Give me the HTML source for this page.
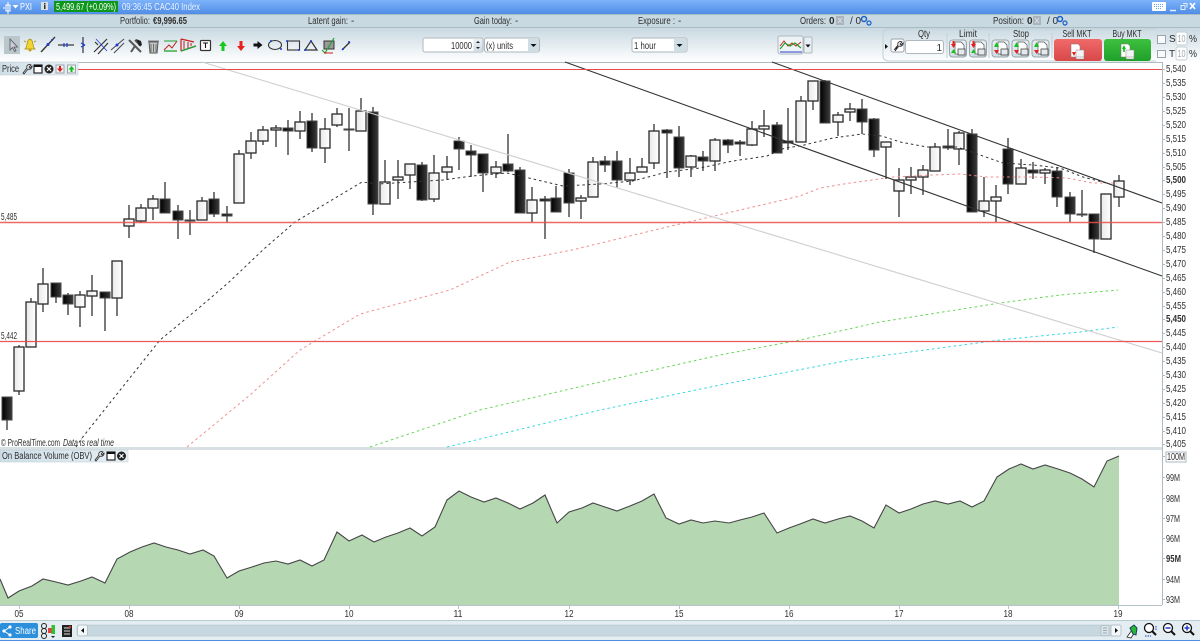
<!DOCTYPE html>
<html><head><meta charset="utf-8"><title>PXI</title>
<style>
html,body{margin:0;padding:0;background:#fff;width:1200px;height:641px;overflow:hidden}
svg{display:block}
text{font-family:"Liberation Sans",Arial,sans-serif;font-size:10px;fill:#2e2e2e}
.w rect{fill:url(#gw);stroke:#2a2a2a;stroke-width:1.300}
.k rect{fill:url(#gk);stroke:#444;stroke-width:1}
</style></head><body>
<svg width="1200" height="641" viewBox="0 0 1200 641" xmlns="http://www.w3.org/2000/svg">
<defs>
<linearGradient id="gt" x1="0" y1="0" x2="0" y2="1"><stop offset="0" stop-color="#7eb3fb"/><stop offset="1" stop-color="#4f8de6"/></linearGradient>
<linearGradient id="gb" x1="0" y1="0" x2="0" y2="1"><stop offset="0" stop-color="#c9d9e2"/><stop offset="1" stop-color="#fff"/></linearGradient>
<linearGradient id="gl" x1="0" y1="0" x2="1" y2="0"><stop offset="0" stop-color="#cfdfe8"/><stop offset="1" stop-color="#e6eff4"/></linearGradient>
<linearGradient id="gw" x1="0" y1="0" x2="1" y2="0"><stop offset="0" stop-color="#e9e9e9"/><stop offset="1" stop-color="#fff"/></linearGradient>
<linearGradient id="gk" x1="0" y1="0" x2="1" y2="0"><stop offset="0" stop-color="#000"/><stop offset="1" stop-color="#3a3a3a"/></linearGradient>
<linearGradient id="gr" x1="0" y1="0" x2="0" y2="1"><stop offset="0" stop-color="#f06a6a"/><stop offset="1" stop-color="#d84848"/></linearGradient>
<linearGradient id="gg" x1="0" y1="0" x2="0" y2="1"><stop offset="0" stop-color="#3ec03e"/><stop offset="1" stop-color="#1fa02a"/></linearGradient>
<linearGradient id="gq" x1="0" y1="0" x2="0" y2="1"><stop offset="0" stop-color="#e8f0f4"/><stop offset="1" stop-color="#cfdde5"/></linearGradient>
</defs>

<!-- title bar -->
<rect width="1200" height="14" fill="url(#gt)"/>
<path d="M3 8h2M6 5h4v6H6zM8 2v12" stroke="#fff" stroke-width="1" fill="none"/>
<path d="M12.500 5h6l-3 3.500z" fill="#fff"/>
<text x="20" y="10" style="fill:#fff" textLength="12" lengthAdjust="spacingAndGlyphs">PXI</text>
<rect x="41" y="2" width="7" height="8" fill="#d8e0e4"/><rect x="44" y="3" width="1.500" height="1.500" fill="#333"/><rect x="44" y="5" width="1.500" height="4" fill="#333"/>
<rect x="54" y="1" width="64" height="11" fill="#0c961a"/>
<text x="56" y="10" style="fill:#fff" textLength="60" lengthAdjust="spacingAndGlyphs">5,499.67 (+0.09%)</text>
<text x="122" y="10" style="fill:#eaf2ff" textLength="78" lengthAdjust="spacingAndGlyphs">09:36:45 CAC40 Index</text>
<rect x="1152" y="2" width="14" height="9" rx="1" fill="#fff"/><path d="M1154 4.500h10M1154 6.500h10M1156 8.500h6" stroke="#6aa3ee" stroke-width="1" stroke-dasharray="1 1"/>
<path d="M1170 10.500h6" stroke="#e6effb" stroke-width="1.500"/>
<path d="M1181 5.500h4v4h-4zM1183 3.500h4v4" stroke="#e6effb" fill="none"/>
<path d="M1190 3l5 6M1195 3l-5 6" stroke="#fff" stroke-width="1.600"/>

<!-- info row -->
<rect y="14" width="1200" height="14" fill="#c9d9e2"/>
<path d="M0 14.500H1200M0 27.500H1200" stroke="#a8bcc6"/>
<g>
<text x="120" y="24" textLength="30" lengthAdjust="spacingAndGlyphs">Portfolio:</text>
<text x="153" y="24" font-weight="700" textLength="34" lengthAdjust="spacingAndGlyphs">€9,996.65</text>
<text x="308" y="24" textLength="40" lengthAdjust="spacingAndGlyphs">Latent gain:</text><text x="351" y="24">-</text>
<text x="474" y="24" textLength="38" lengthAdjust="spacingAndGlyphs">Gain today:</text><text x="515" y="24">-</text>
<text x="638" y="24" textLength="37" lengthAdjust="spacingAndGlyphs">Exposure :</text><text x="678" y="24">-</text>
<text x="800" y="24" textLength="26" lengthAdjust="spacingAndGlyphs">Orders:</text><text x="829" y="24" font-weight="700">0</text>
<rect x="836" y="16" width="8" height="9" fill="#a9b5ba"/><path d="M838 18l4 5M842 18l-4 5" stroke="#dde"/>
<text x="850" y="24">/ 0</text>
<circle cx="864" cy="19" r="2.500" fill="none" stroke="#1860c8" stroke-width="1.500"/><circle cx="869" cy="23" r="2" fill="none" stroke="#1860c8" stroke-width="1.200"/>
<text x="993" y="24" textLength="31" lengthAdjust="spacingAndGlyphs">Position:</text><text x="1027" y="24" font-weight="700">0</text>
<rect x="1033" y="16" width="8" height="9" fill="#a9b5ba"/><path d="M1035 18l4 5M1039 18l-4 5" stroke="#dde"/>
<text x="1047" y="24">/ 0</text>
<circle cx="1060" cy="19" r="2.500" fill="none" stroke="#1860c8" stroke-width="1.500"/><circle cx="1065" cy="23" r="2" fill="none" stroke="#1860c8" stroke-width="1.200"/>
</g>

<!-- toolbar -->
<rect y="28" width="1200" height="34" fill="url(#gb)"/>
<rect x="4" y="36" width="16" height="18" fill="#b9c6cc"/>
<path d="M10 39v11l2.500-2.500 2 4 1.500-.8-2-3.700h3.500z" fill="#ccd" stroke="#555" stroke-width=".8"/>
<path d="M25 49c3-2 1-9 5-10 4 1 2 8 5 10z" fill="#f3d431" stroke="#a08a10" stroke-width=".7"/><circle cx="30" cy="50" r="1.500" fill="#c8a010"/><path d="M24 41l2 1M36 41l-2 1" stroke="#b8a020"/>
<path d="M41 52l14-15" stroke="#333" stroke-width="1.300"/><circle cx="48" cy="44.500" r="1.500" fill="#1c3cd0"/><circle cx="52" cy="40" r="1" fill="#1c3cd0"/>
<path d="M58 45h16" stroke="#333" stroke-width="1.200"/><path d="M64 43v4M67 43v4" stroke="#1c3cd0" stroke-width="1.200"/>
<path d="M83 37v16" stroke="#556" stroke-width="1.500"/><path d="M81 43l4 2M81 47l4-2" stroke="#1c3cd0" stroke-width="1.200"/>
<path d="M94 52l13-13M98 54l10-11M95 42l3 3" stroke="#333" stroke-width="1.200"/><path d="M96 39l11 12" stroke="#1c3cd0" stroke-width=".8"/>
<path d="M111 50l13-11M114 53l10-10" stroke="#445" stroke-width="1"/><circle cx="117" cy="45" r="1.500" fill="#1c3cd0"/>
<path d="M129 40l12 12M131 52l4-6M135 40l6 6" stroke="#555" stroke-width="2" fill="none"/><path d="M136 39l5 2 1 4-3 1z" fill="#222"/>
<path d="M149 42h9l-1 11h-7z" fill="#c6c8c8" stroke="#555"/><path d="M148 41h11M151 44v8M153.500 44v8M156 44v8" stroke="#555" stroke-width=".8"/>
<path d="M164 50l5-5 3 3 5-7" stroke="#c02020" fill="none" stroke-width="1"/><path d="M164 41h13" stroke="#22a030"/><path d="M164 51h13" stroke="#22a030" stroke-width="1.300"/>
<path d="M181 39l13 3M181 39v12M181 51l15-5" stroke="#c82020" stroke-width="1.200" fill="none"/><path d="M184 41v8M188 42v6M191 43v3" stroke="#b02020"/><path d="M181 51l15-5" stroke="#20a030" stroke-width="1.200"/>
<rect x="200.500" y="40.500" width="10" height="10" rx="1" fill="#fff" stroke="#333" stroke-width="1.200"/><path d="M203 43h5M205.500 43v5" stroke="#111" stroke-width="1.100"/>
<path d="M223 41l-4 5h2.500v5h3v-5h2.500z" fill="#17c81f"/>
<path d="M241 51l-4-5h2.500v-5h3v5h2.500z" fill="#e81f1f"/>
<path d="M262.500 45l-5-4v2.500h-4v3h4v2.500z" fill="#111"/>
<ellipse cx="275" cy="45" rx="6.500" ry="4.500" fill="none" stroke="#333" stroke-width="1.100"/><circle cx="271" cy="41" r="1" fill="#1c3cd0"/><circle cx="281" cy="49" r="1" fill="#1c3cd0"/>
<rect x="287.500" y="41" width="12" height="9" fill="none" stroke="#333" stroke-width="1.100"/><circle cx="287" cy="41" r="1" fill="#1c3cd0"/><circle cx="299" cy="50" r="1" fill="#1c3cd0"/>
<path d="M311 41l-6 9h12z" fill="none" stroke="#333" stroke-width="1.200"/><circle cx="311" cy="41" r="1" fill="#1c3cd0"/><circle cx="305" cy="50" r="1" fill="#1c3cd0"/>
<rect x="324" y="41" width="10" height="8" fill="#999" stroke="#333"/><path d="M322 50l3 3 9-15" stroke="#20a030" stroke-width="1.200" fill="none"/><path d="M324 53h9" stroke="#d02020"/>
<path d="M342 50l8-8" stroke="#333" stroke-width="1.300"/><circle cx="343" cy="49" r="1" fill="#1c3cd0"/><circle cx="349" cy="42" r="1" fill="#1c3cd0"/>

<!-- quantity -->
<rect x="423" y="38" width="60" height="14" rx="2" fill="#fff" stroke="#aeb9be"/>
<text x="472" y="49" text-anchor="end" textLength="21" lengthAdjust="spacingAndGlyphs">10000</text>
<rect x="473.500" y="39" width="9" height="12" fill="url(#gq)"/><path d="M476 43h4l-2-2zM476 47h4l-2 2z" fill="#222"/>
<rect x="484.500" y="38" width="55" height="14" rx="2" fill="#fff" stroke="#aeb9be"/>
<text x="486" y="49" textLength="27" lengthAdjust="spacingAndGlyphs">(x) units</text>
<rect x="528" y="39" width="11" height="12" fill="#cfdde5"/><path d="M530.500 44h6l-3 3z" fill="#111"/>
<rect x="632" y="38" width="55" height="14" rx="2" fill="#fff" stroke="#aeb9be"/>
<text x="634" y="49" textLength="22" lengthAdjust="spacingAndGlyphs">1 hour</text>
<rect x="674" y="39" width="12" height="12" fill="#cfdde5"/><path d="M676.500 44h6l-3 3z" fill="#111"/>

<!-- chart type -->
<rect x="778" y="36" width="25" height="18" rx="2" fill="#eef3f5" stroke="#aeb9be"/>
<path d="M780 46l4-5 4 5 4-3 4 3 5-4" stroke="#d02020" fill="none"/><path d="M780 49l5-6 5 3 5-3 6 5" stroke="#20a030" fill="none" stroke-width="1.200"/><path d="M780 52h22" stroke="#2a3ccc"/>
<rect x="804" y="37" width="8" height="16" rx="1" fill="#e8eff3" stroke="#aeb9be"/><path d="M805.500 44.500h5l-2.500 3z" fill="#111"/>

<!-- order panel -->
<path d="M1156 29H889q-6 0-6 6v20q0 6 6 6h267" fill="none" stroke="#c4d0d6"/>
<path d="M885 44l3 2.500-3 2.500z" fill="#111"/>
<rect x="891" y="39" width="13" height="13" rx="2" fill="#fff" stroke="#9aa5aa"/>
<path d="M894 50l4-5m0 0c-1-3 2-4 4-3l-2 2 1 1 2-2c.5 2-2 4-4 3l-4 5z" fill="#fff" stroke="#222" stroke-width=".8"/>
<rect x="905.500" y="40.500" width="38" height="13" rx="2" fill="#fff" stroke="#aeb9be"/>
<text x="942" y="51" text-anchor="end">1</text>
<text x="924" y="37" text-anchor="middle" textLength="12" lengthAdjust="spacingAndGlyphs">Qty</text>
<text x="968" y="37" text-anchor="middle" textLength="18" lengthAdjust="spacingAndGlyphs">Limit</text>
<text x="1021" y="37" text-anchor="middle" textLength="16" lengthAdjust="spacingAndGlyphs">Stop</text>
<text x="1077" y="37" text-anchor="middle" textLength="29" lengthAdjust="spacingAndGlyphs">Sell MKT</text>
<text x="1127" y="37" text-anchor="middle" textLength="29" lengthAdjust="spacingAndGlyphs">Buy MKT</text>
<path d="M947 33v25M989 33v25M1052 33v25" stroke="#c4d0d6"/>
<g fill="url(#gq)" stroke="#9aa5aa"><rect x="949.500" y="40" width="17" height="17" rx="3"/><rect x="969.500" y="40" width="17" height="17" rx="3"/><rect x="992" y="40" width="17" height="17" rx="3"/><rect x="1012" y="40" width="17" height="17" rx="3"/><rect x="1032" y="40" width="17" height="17" rx="3"/></g>
<g fill="#fff" stroke="#555" stroke-width=".7"><path d="M955 42h6l3 3v9h-9z"/><path d="M975 42h6l3 3v9h-9z"/><path d="M998 42h6l3 3v9h-9z"/><path d="M1018 42h6l3 3v9h-9z"/><path d="M1038 42h6l3 3v9h-9z"/></g>
<g stroke="#444" stroke-width=".8" fill="#e3e9ec"><rect x="958" y="49" width="7" height="6"/><rect x="978" y="49" width="7" height="6"/><rect x="1001" y="49" width="7" height="6"/><rect x="1021" y="49" width="7" height="6"/><rect x="1041" y="49" width="7" height="6"/></g>
<g fill="#e81f1f"><path d="M951 44h5l-2.500 4zM971 44h5l-2.500 4zM994 50h5l-2.500 4zM1014 50h5l-2.500 4zM1034 50h5l-2.500 4z"/><rect x="952.500" y="41" width="2" height="3"/><rect x="972.500" y="41" width="2" height="3"/></g>
<g fill="#14c41c"><path d="M951 53h5l-2.500-4zM971 53h5l-2.500-4zM994 47h5l-2.500-5zM1014 47h5l-2.500-5zM1034 47h5l-2.500-5z"/></g>
<rect x="1054" y="39" width="48" height="22" rx="3" fill="url(#gr)"/>
<rect x="1104" y="39" width="47" height="22" rx="3" fill="url(#gg)"/>
<path d="M1071 44h7l2 2v6h4v7h-8v-2h-5z" fill="#fff" stroke="#777" stroke-width=".5"/><rect x="1076" y="50" width="8" height="7" fill="#f4f4f4" stroke="#888" stroke-width=".5"/><path d="M1072 52l4 .1-2 3.900z" fill="#e01818"/>
<path d="M1121 44h7l2 2v6h4v7h-8v-2h-5z" fill="#fff" stroke="#777" stroke-width=".5"/><rect x="1126" y="50" width="8" height="7" fill="#f4f4f4" stroke="#888" stroke-width=".5"/><path d="M1122 49l4 .1-2-4z" fill="#10c018"/><rect x="1123.200" y="49" width="1.600" height="3" fill="#10c018"/>
<g fill="#f8fafb" stroke="#9aa5aa"><rect x="1157.500" y="35.500" width="8" height="8"/><rect x="1157.500" y="50.500" width="8" height="7"/></g>
<text x="1169" y="42">S</text><text x="1169" y="57">T</text>
<g fill="#fff" stroke="#c4ced3"><rect x="1176" y="32" width="11" height="13" rx="2"/><rect x="1176" y="47" width="11" height="13" rx="2"/></g>
<text x="1181.500" y="42" text-anchor="middle" style="fill:#a0a8ad" textLength="8" lengthAdjust="spacingAndGlyphs">10</text>
<text x="1181.500" y="57" text-anchor="middle" style="fill:#a0a8ad" textLength="8" lengthAdjust="spacingAndGlyphs">10</text>
<text x="1189" y="42" textLength="8" lengthAdjust="spacingAndGlyphs">%</text><text x="1189" y="57" textLength="8" lengthAdjust="spacingAndGlyphs">%</text>

<!-- chart frame -->
<path d="M0 62.500H1162" stroke="#adbcc1"/>
<path d="M1162.500 62V605" stroke="#aebcc1"/>
<rect y="447" width="1162" height="3" fill="#d8e0e3"/>

<!-- wicks -->
<path stroke="#333" stroke-width="1.300" fill="none" d="M7 397V430M19 345V395M31 298V347M43 268V312M56 283V303M68 293V315M80 291V327M92 275V316M105 292V331M117 261V316M129 205V238M141 204V223M153 195V220M165 182V213M178 205V239M190 210V235M202 197V220M214 192V217M227 206V222M239 150V203M251 132V159M263 126V145M276 125V147M288 120V155M300 111V139M312 113V152M325 118V163M337 108V127M349 108V151M361 98V131M373 107V215M385 160V204M398 160V199M410 164V189M422 162V201M434 155V202M447 156V180M459 137V170M471 145V177M483 154V192M496 161V178M508 134V172M520 167V213M532 187V222M545 196V239M556 186V212M569 169V217M581 195V219M593 157V197M605 156V172M617 151V188M630 158V185M642 158V172M654 124V169M667 129V178M679 126V177M691 155V177M703 151V171M715 138V171M728 139V153M740 140V156M752 121V146M764 110V137M777 122V153M788 108V150M801 96V142M813 81V110M825 80V123M838 112V136M850 103V121M862 99V134M874 118V157M886 142V179M899 168V217M911 167V194M923 165V195M935 143V171M948 129V150M959 131V165M972 129V212M984 177V217M996 185V222M1008 138V194M1021 159V184M1033 162V179M1045 168V184M1057 167V207M1070 192V222M1082 190V217M1094 214V253M1106 194V239M1119 175V207"/>

<!-- white bodies -->
<g class="w">
<rect x="14" y="347" width="10" height="44"/><rect x="26" y="302" width="10" height="45"/><rect x="38" y="284" width="10" height="20"/><rect x="75" y="295" width="10" height="12"/><rect x="87" y="291" width="10" height="5"/><rect x="112" y="261" width="10" height="37"/><rect x="124" y="219" width="10" height="7"/><rect x="136" y="208" width="10" height="13"/><rect x="148" y="199" width="10" height="9"/><rect x="197" y="201" width="10" height="19"/><rect x="234" y="154" width="10" height="49"/><rect x="246" y="141" width="10" height="12"/><rect x="258" y="130" width="10" height="11"/><rect x="271" y="128" width="10" height="2"/><rect x="295" y="122" width="10" height="9"/><rect x="320" y="129" width="10" height="19"/><rect x="332" y="114" width="10" height="11"/><rect x="356" y="111" width="10" height="20"/><rect x="380" y="182" width="10" height="22"/><rect x="393" y="177" width="10" height="3"/><rect x="405" y="164" width="10" height="11"/><rect x="429" y="173" width="10" height="26"/><rect x="442" y="167" width="10" height="5"/><rect x="491" y="167" width="10" height="6"/><rect x="527" y="200" width="10" height="13"/><rect x="576" y="198" width="10" height="3"/><rect x="588" y="162" width="10" height="35"/><rect x="625" y="173" width="10" height="7"/><rect x="637" y="167" width="10" height="5"/><rect x="649" y="131" width="10" height="32"/><rect x="686" y="156" width="10" height="11"/><rect x="710" y="140" width="10" height="21"/><rect x="747" y="129" width="10" height="16"/><rect x="759" y="126" width="10" height="3"/><rect x="796" y="101" width="10" height="41"/><rect x="808" y="81" width="10" height="20"/><rect x="833" y="115" width="10" height="7"/><rect x="845" y="109" width="10" height="3"/><rect x="881" y="142" width="10" height="5"/><rect x="894" y="180" width="10" height="11"/><rect x="906" y="177" width="10" height="3"/><rect x="918" y="170" width="10" height="7"/><rect x="930" y="147" width="10" height="24"/><rect x="954" y="133" width="10" height="16"/><rect x="979" y="201" width="10" height="10"/><rect x="991" y="197" width="10" height="4"/><rect x="1016" y="168" width="10" height="16"/><rect x="1040" y="170" width="10" height="3"/><rect x="1101" y="194" width="10" height="45"/><rect x="1114" y="181" width="10" height="16"/>
</g>
<!-- black bodies -->
<g class="k">
<rect x="2" y="397" width="10" height="23"/><rect x="51" y="283" width="10" height="14"/><rect x="63" y="295" width="10" height="9"/><rect x="100" y="292" width="10" height="6"/><rect x="160" y="199" width="10" height="14"/><rect x="173" y="211" width="10" height="9"/><rect x="185" y="220" width="10" height="1"/><rect x="209" y="199" width="10" height="15"/><rect x="222" y="214" width="10" height="2"/><rect x="283" y="128" width="10" height="3"/><rect x="307" y="121" width="10" height="27"/><rect x="344" y="129" width="10" height="1"/><rect x="368" y="112" width="10" height="92"/><rect x="417" y="165" width="10" height="35"/><rect x="454" y="141" width="10" height="8"/><rect x="466" y="151" width="10" height="4"/><rect x="478" y="154" width="10" height="19"/><rect x="503" y="164" width="10" height="7"/><rect x="515" y="170" width="10" height="43"/><rect x="540" y="199" width="10" height="2"/><rect x="551" y="198" width="10" height="14"/><rect x="564" y="173" width="10" height="30"/><rect x="600" y="161" width="10" height="4"/><rect x="612" y="161" width="10" height="19"/><rect x="662" y="130" width="10" height="3"/><rect x="674" y="137" width="10" height="31"/><rect x="698" y="157" width="10" height="4"/><rect x="723" y="140" width="10" height="5"/><rect x="735" y="142" width="10" height="2"/><rect x="772" y="125" width="10" height="28"/><rect x="783" y="141" width="10" height="2"/><rect x="820" y="81" width="10" height="42"/><rect x="857" y="109" width="10" height="13"/><rect x="869" y="119" width="10" height="31"/><rect x="943" y="146" width="10" height="2"/><rect x="967" y="134" width="10" height="78"/><rect x="1003" y="149" width="10" height="35"/><rect x="1028" y="170" width="10" height="3"/><rect x="1052" y="171" width="10" height="26"/><rect x="1065" y="197" width="10" height="17"/><rect x="1077" y="214" width="10" height="1"/><rect x="1089" y="214" width="10" height="25"/>
</g>

<!-- moving averages -->
<path fill="none" stroke="#333" stroke-width="1" stroke-dasharray="2.500 3" d="M76 447L82 438L160 340L200 307L228 283L265 248L295 222L362 182L378 184L410 182L443 180L472 176L507 173L533 179L563 186L600 184L633 181L667 172L700 168L733 161L767 156L785 148L800 146L833 138L862 134L882 136L900 142L927 147L957 147L980 155L1003 163L1033 165L1060 168L1083 177L1110 184"/>
<path fill="none" stroke="#f28c8c" stroke-width="1" stroke-dasharray="2.500 3" d="M187 447L250 395L300 350L360 314L450 290L510 262L572 250L667 227L710 217L800 196L820 188L850 183L893 177L933 175L960 174L987 177L1033 177L1067 178L1093 183L1117 183"/>
<path fill="none" stroke="#5fd84f" stroke-width="1" stroke-dasharray="2.500 3" d="M370 447L480 410L600 382L720 355L800 340L880 322L1000 303L1060 295L1118 290"/>
<path fill="none" stroke="#35d6e0" stroke-width="1" stroke-dasharray="2.500 3" d="M447 447L600 410L720 385L850 360L1000 340L1080 332L1118 327"/>

<!-- trend lines -->
<path d="M202 62L1162 353" stroke="#cfcfcf" stroke-width="1.100"/>
<path d="M565 62L1162 276M772 62L1162 203" stroke="#333" stroke-width="1.100"/>
<!-- horizontal lines -->
<path d="M78 69.500H1162" stroke="#e64a4a" stroke-width="1.100"/>
<path d="M0 222.500H1162" stroke="#ea4e4e" stroke-width="1.500" opacity=".85"/>
<path d="M0 341.500H1162" stroke="#e64a4a" stroke-width="1.200" opacity=".9"/>
<text x="1" y="220" textLength="16" lengthAdjust="spacingAndGlyphs">5,485</text>
<text x="1" y="339" textLength="16" lengthAdjust="spacingAndGlyphs">5,442</text>

<!-- price legend -->
<rect x="0" y="62" width="78" height="13" fill="url(#gl)" stroke="#bccad0" stroke-width=".5"/>
<text x="2" y="72" textLength="17" lengthAdjust="spacingAndGlyphs">Price</text>
<path d="M23 73l4-5c-1-3 2-4 4-3l-2 2 1 1 2-2c.5 2-2 4-4 3l-4 5z" fill="#fff" stroke="#222" stroke-width=".8"/>
<rect x="34" y="65" width="8" height="8" fill="#fff" stroke="#111" stroke-width="1.100"/><rect x="34" y="65" width="8" height="2" fill="#111"/>
<circle cx="49" cy="69" r="4.500" fill="#222"/><path d="M47 67l4 4M51 67l-4 4" stroke="#fff" stroke-width="1.200"/>
<rect x="56" y="65" width="8" height="8" fill="#eef3f5" stroke="#9aa5aa"/><path d="M60 72l-3-3.500h2V66h2v2.500h2z" fill="#e01818"/>
<rect x="67.500" y="65" width="8" height="8" fill="#eef3f5" stroke="#9aa5aa"/><path d="M71.500 66l-3 3.500h2V72h2v-2.500h2z" fill="#10c018"/>

<!-- price axis -->
<g>
<path d="M1162 69.500h3M1162 83.500h3M1162 97.500h3M1162 111.500h3M1162 125.500h3M1162 139.500h3M1162 153.500h3M1162 167.500h3M1162 180.500h3M1162 194.500h3M1162 208.500h3M1162 222.500h3M1162 236.500h3M1162 250.500h3M1162 264.500h3M1162 278.500h3M1162 292.500h3M1162 306.500h3M1162 319.500h3M1162 333.500h3M1162 347.500h3M1162 361.500h3M1162 375.500h3M1162 389.500h3M1162 403.500h3M1162 417.500h3M1162 431.500h3M1162 444.500h3" stroke="#aebcc1"/>
<text x="1166" y="72" textLength="20" lengthAdjust="spacingAndGlyphs">5,540</text>
<text x="1166" y="86" textLength="20" lengthAdjust="spacingAndGlyphs">5,535</text>
<text x="1166" y="100" textLength="20" lengthAdjust="spacingAndGlyphs">5,530</text>
<text x="1166" y="114" textLength="20" lengthAdjust="spacingAndGlyphs">5,525</text>
<text x="1166" y="128" textLength="20" lengthAdjust="spacingAndGlyphs">5,520</text>
<text x="1166" y="142" textLength="20" lengthAdjust="spacingAndGlyphs">5,515</text>
<text x="1166" y="156" textLength="20" lengthAdjust="spacingAndGlyphs">5,510</text>
<text x="1166" y="170" textLength="20" lengthAdjust="spacingAndGlyphs">5,505</text>
<text x="1166" y="183" textLength="20" lengthAdjust="spacingAndGlyphs" font-weight="700">5,500</text>
<text x="1166" y="197" textLength="20" lengthAdjust="spacingAndGlyphs">5,495</text>
<text x="1166" y="211" textLength="20" lengthAdjust="spacingAndGlyphs">5,490</text>
<text x="1166" y="225" textLength="20" lengthAdjust="spacingAndGlyphs">5,485</text>
<text x="1166" y="239" textLength="20" lengthAdjust="spacingAndGlyphs">5,480</text>
<text x="1166" y="253" textLength="20" lengthAdjust="spacingAndGlyphs">5,475</text>
<text x="1166" y="267" textLength="20" lengthAdjust="spacingAndGlyphs">5,470</text>
<text x="1166" y="281" textLength="20" lengthAdjust="spacingAndGlyphs">5,465</text>
<text x="1166" y="295" textLength="20" lengthAdjust="spacingAndGlyphs">5,460</text>
<text x="1166" y="309" textLength="20" lengthAdjust="spacingAndGlyphs">5,455</text>
<text x="1166" y="322" textLength="20" lengthAdjust="spacingAndGlyphs" font-weight="700">5,450</text>
<text x="1166" y="336" textLength="20" lengthAdjust="spacingAndGlyphs">5,445</text>
<text x="1166" y="350" textLength="20" lengthAdjust="spacingAndGlyphs">5,440</text>
<text x="1166" y="364" textLength="20" lengthAdjust="spacingAndGlyphs">5,435</text>
<text x="1166" y="378" textLength="20" lengthAdjust="spacingAndGlyphs">5,430</text>
<text x="1166" y="392" textLength="20" lengthAdjust="spacingAndGlyphs">5,425</text>
<text x="1166" y="406" textLength="20" lengthAdjust="spacingAndGlyphs">5,420</text>
<text x="1166" y="420" textLength="20" lengthAdjust="spacingAndGlyphs">5,415</text>
<text x="1166" y="434" textLength="20" lengthAdjust="spacingAndGlyphs">5,410</text>
<text x="1166" y="447" textLength="20" lengthAdjust="spacingAndGlyphs">5,405</text>
</g>

<!-- copyright -->
<text x="1" y="446" textLength="59" lengthAdjust="spacingAndGlyphs">© ProRealTime.com</text>
<text x="63" y="446" font-style="italic" textLength="51" lengthAdjust="spacingAndGlyphs">Data is real time</text>

<!-- OBV -->
<path fill="#b5d8b3" d="M0 579L8 598L19 591L32 586L43 579L56 582L68 585L81 581L92 577L105 583L111 571L117 559L130 552L142 547L154 543L166 547L178 550L190 554L203 550L214 556L227 578L239 571L252 567L264 563L276 561L288 564L300 560L312 566L324 560L337 532L349 541L362 535L374 542L386 537L398 533L410 528L422 536L435 527L447 500L459 491L471 497L484 502L496 498L508 503L520 509L533 503L545 495L557 523L569 512L582 508L593 503L605 507L617 511L630 506L642 501L654 494L666 518L679 524L691 520L703 523L715 521L729 523L740 520L752 517L764 513L777 533L789 528L800 524L813 519L825 523L838 519L850 516L862 521L874 528L886 505L899 513L911 509L923 504L935 501L948 504L960 501L972 507L984 501L997 477L1009 469L1021 464L1033 469L1045 465L1058 469L1070 473L1082 479L1094 487L1107 461L1119 456V605H0Z"/>
<path fill="none" stroke="#454545" stroke-width="1.100" d="M0 579L8 598L19 591L32 586L43 579L56 582L68 585L81 581L92 577L105 583L111 571L117 559L130 552L142 547L154 543L166 547L178 550L190 554L203 550L214 556L227 578L239 571L252 567L264 563L276 561L288 564L300 560L312 566L324 560L337 532L349 541L362 535L374 542L386 537L398 533L410 528L422 536L435 527L447 500L459 491L471 497L484 502L496 498L508 503L520 509L533 503L545 495L557 523L569 512L582 508L593 503L605 507L617 511L630 506L642 501L654 494L666 518L679 524L691 520L703 523L715 521L729 523L740 520L752 517L764 513L777 533L789 528L800 524L813 519L825 523L838 519L850 516L862 521L874 528L886 505L899 513L911 509L923 504L935 501L948 504L960 501L972 507L984 501L997 477L1009 469L1021 464L1033 469L1045 465L1058 469L1070 473L1082 479L1094 487L1107 461L1119 456"/>
<path d="M0 605.500H1162" stroke="#b4c4c8"/>

<!-- OBV legend -->
<rect x="0" y="450" width="128" height="12" fill="url(#gl)" stroke="#bccad0" stroke-width=".5"/>
<text x="2" y="459" textLength="90" lengthAdjust="spacingAndGlyphs">On Balance Volume (OBV)</text>
<path d="M95 460l4-5c-1-3 2-4 4-3l-2 2 1 1 2-2c.5 2-2 4-4 3l-4 5z" fill="#fff" stroke="#222" stroke-width=".8"/>
<rect x="107" y="452" width="8" height="8" fill="#fff" stroke="#111" stroke-width="1.100"/><rect x="107" y="452" width="8" height="2" fill="#111"/>
<circle cx="121.500" cy="456" r="4.500" fill="#222"/><path d="M119.500 454l4 4M123.500 454l-4 4" stroke="#fff" stroke-width="1.200"/>

<!-- OBV axis -->
<rect x="1166" y="452" width="20" height="10" fill="#fff" stroke="#a8b8bc"/>
<path d="M1162 456.500h3M1162 477.500h3M1162 498.500h3M1162 518.500h3M1162 538.500h3M1162 558.500h3M1162 579.500h3M1162 599.500h3" stroke="#aebcc1"/>
<text x="1167" y="460" textLength="18" lengthAdjust="spacingAndGlyphs">100M</text>
<text x="1166" y="481" textLength="14" lengthAdjust="spacingAndGlyphs">99M</text>
<text x="1166" y="502" textLength="14" lengthAdjust="spacingAndGlyphs">98M</text>
<text x="1166" y="522" textLength="14" lengthAdjust="spacingAndGlyphs">97M</text>
<text x="1166" y="542" textLength="14" lengthAdjust="spacingAndGlyphs">96M</text>
<text x="1166" y="562" textLength="15" lengthAdjust="spacingAndGlyphs" font-weight="700">95M</text>
<text x="1166" y="583" textLength="14" lengthAdjust="spacingAndGlyphs">94M</text>
<text x="1166" y="603" textLength="14" lengthAdjust="spacingAndGlyphs">93M</text>

<!-- x axis -->
<path d="M19.500 605v4M129.500 605v4M239.500 605v4M349.500 605v4M458.500 605v4M569.500 605v4M679.500 605v4M789.500 605v4M899.500 605v4M1008.500 605v4M1118.500 605v4" stroke="#b4c4c8"/>
<g text-anchor="middle">
<text x="19" y="617" textLength="9" lengthAdjust="spacingAndGlyphs">05</text>
<text x="129" y="617" textLength="9" lengthAdjust="spacingAndGlyphs">08</text>
<text x="239" y="617" textLength="9" lengthAdjust="spacingAndGlyphs">09</text>
<text x="349" y="617" textLength="9" lengthAdjust="spacingAndGlyphs">10</text>
<text x="458" y="617" textLength="9" lengthAdjust="spacingAndGlyphs">11</text>
<text x="569" y="617" textLength="9" lengthAdjust="spacingAndGlyphs">12</text>
<text x="679" y="617" textLength="9" lengthAdjust="spacingAndGlyphs">15</text>
<text x="789" y="617" textLength="9" lengthAdjust="spacingAndGlyphs">16</text>
<text x="899" y="617" textLength="9" lengthAdjust="spacingAndGlyphs">17</text>
<text x="1008" y="617" textLength="9" lengthAdjust="spacingAndGlyphs">18</text>
<text x="1118" y="617" textLength="9" lengthAdjust="spacingAndGlyphs">19</text>
</g>

<!-- bottom bar -->
<rect y="620" width="1200" height="20" fill="#e4edf1"/>
<path d="M0 620.500H1200" stroke="#b9cad2"/>
<rect y="640" width="1200" height="1" fill="#4f8de6"/>
<rect x="0" y="623" width="38" height="15" rx="2" fill="#2b8fdc"/>
<circle cx="4" cy="631" r="1.600" fill="#fff"/><circle cx="10" cy="627" r="1.600" fill="#fff"/><circle cx="10" cy="635" r="1.600" fill="#fff"/><path d="M4 631l6-4M4 631l6 4" stroke="#fff"/>
<text x="15" y="634" style="fill:#fff" textLength="21" lengthAdjust="spacingAndGlyphs">Share</text>
<g fill="none" stroke="#222"><circle cx="44" cy="626" r="2.500"/><circle cx="44" cy="631" r="2.500"/><circle cx="44" cy="636" r="2.500"/></g>
<rect x="48" y="628" width="4" height="5" fill="#e04040"/><rect x="51.500" y="625" width="3.500" height="9" fill="#30c030"/><path d="M51 636h4l-2 2z" fill="#222"/>
<rect x="62" y="625" width="10" height="12" fill="#222"/><path d="M64 628h6M64 631h6M64 634h6" stroke="#ddd"/><circle cx="70" cy="627" r="1.200" fill="#d83030"/>
<rect x="77" y="625" width="1043" height="11" rx="2" fill="#c7d7e0" stroke="#aebfc8" stroke-width=".6"/>
<rect x="77.500" y="625" width="10" height="11" rx="2" fill="#f4f7f9" stroke="#b5c3ca"/><path d="M84 628v5l-3-2.500z" fill="#111"/>
<rect x="1101" y="625.500" width="8" height="10" rx="1" fill="#dde6eb" stroke="#b5c3ca"/><path d="M1103 628h4M1103 630.500h4M1103 633h4" stroke="#9aa8ae"/>
<rect x="1111" y="625" width="10" height="11" rx="2" fill="#f4f7f9" stroke="#b5c3ca"/><path d="M1115 628v5l3-2.500z" fill="#111"/>
<path d="M1127 637l5-7 3 2-4 6z" fill="#fff" stroke="#222" stroke-width=".8"/><path d="M1130 628l4-3 3 3-1 7-3-1z" fill="#29b833" stroke="#146"/>
<circle cx="1149" cy="628" r="4.500" fill="#fff" stroke="#111" stroke-width="1.300"/><path d="M1152 631l4 4" stroke="#111" stroke-width="2"/><path d="M1145 636h6M1156 626v5" stroke="#1c3cd0" stroke-dasharray="1.500 1"/>
<circle cx="1168" cy="628" r="4.500" fill="#fff" stroke="#111" stroke-width="1.300"/><path d="M1171 631l4 4" stroke="#111" stroke-width="2"/><path d="M1165.500 628h5" stroke="#1c3cd0" stroke-width="1.500"/>
<circle cx="1187" cy="628" r="4.500" fill="#fff" stroke="#111" stroke-width="1.300"/><path d="M1190 631l4 4" stroke="#111" stroke-width="2"/><path d="M1184.500 628h5M1187 625.500v5" stroke="#1c3cd0" stroke-width="1.500"/>
</svg>
</body></html>
